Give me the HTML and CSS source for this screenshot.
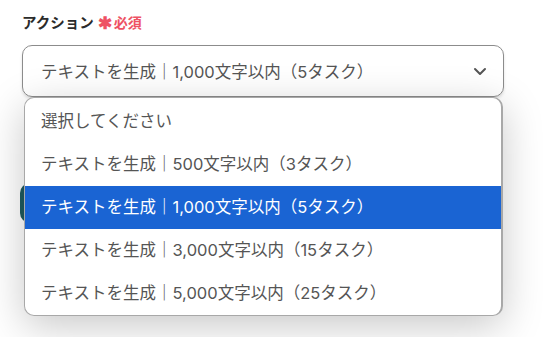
FILE: index.html
```html
<!DOCTYPE html>
<html lang="ja">
<head>
    <meta charset="UTF-8">
    <meta name="viewport" content="width=device-width, initial-scale=1.0">
    <title>アクション選択</title>
    <link rel="stylesheet" href="styles.css">
</head>
<body>
    <div class="field">
        <div class="field-label">アクション<span class="required"><span class="star">✱</span>必須</span></div>
        <div class="select-wrap">
            <div class="select-box">
                <span class="select-value">テキストを生成｜1,000文字以内（5タスク）</span>
                <svg class="chevron" width="14" height="9" viewBox="0 0 14 9">
                    <path d="M2 2 L7 7 L12 2" fill="none" stroke="#555" stroke-width="2" stroke-linecap="round" stroke-linejoin="round"/>
                </svg>
            </div>
            <!-- dropdown list, open over the content below -->
            <ul class="options">
                <li class="option">選択してください</li>
                <li class="option">テキストを生成｜500文字以内（3タスク）</li>
                <li class="option selected">テキストを生成｜1,000文字以内（5タスク）</li>
                <li class="option">テキストを生成｜3,000文字以内（15タスク）</li>
                <li class="option">テキストを生成｜5,000文字以内（25タスク）</li>
            </ul>
        </div>
        <button class="next-button">次へ</button>
    </div>
</body>
</html>
```

FILE: styles.css
```css
html, body {
    height: 100%;
}
body {
    margin: 0;
    font-family: Inter, "Noto Sans CJK JP", sans-serif;
    background-color: #ffffff;
    color: #333333;
}
.field {
    padding: 13px 39px 0 22px;
}
.field-label {
    font-size: 14.5px;
    font-weight: bold;
    color: #2b2b2b;
    line-height: 20px;
    display: flex;
    align-items: center;
}
.required {
    color: #ee5264;
    font-size: 14px;
    margin-left: 4px;
    display: flex;
    align-items: center;
}
.star {
    font-size: 17px;
    margin-right: 2px;
}
.select-wrap {
    position: relative;
    margin-top: 12px;
}
.select-box {
    height: 50px;
    border: 1px solid #8c8c8c;
    border-radius: 10px;
    box-shadow: 0 2px 3px rgba(0, 0, 0, 0.12);
    display: flex;
    align-items: center;
    justify-content: space-between;
    padding: 0 16px 0 18px;
}
.select-value {
    font-size: 16.5px;
    color: #555555;
}
.chevron {
    display: block;
}
.options {
    position: absolute;
    top: 52px;
    left: 2px;
    right: 1px;
    margin: 0;
    padding: 2px 0 0 0;
    list-style: none;
    background-color: #ffffff;
    border: 1px solid #a8a8a8;
    border-right-width: 2px;
    border-bottom-width: 1px;
    border-radius: 10px;
    overflow: hidden;
    box-shadow: 0 10px 40px rgba(0, 0, 0, 0.22);
    z-index: 10;
}
.option {
    height: 43px;
    line-height: 43px;
    padding-left: 16px;
    font-size: 16.5px;
    color: #555555;
}
.option.selected {
    background-color: #1a64d3;
    color: #ffffff;
}
.next-button {
    margin-top: 86px;
    margin-left: -2px;
    width: 120px;
    height: 40px;
    border: none;
    border-radius: 10px;
    background-color: #1f5b5e;
    color: #ffffff;
    font-size: 15px;
}
```
